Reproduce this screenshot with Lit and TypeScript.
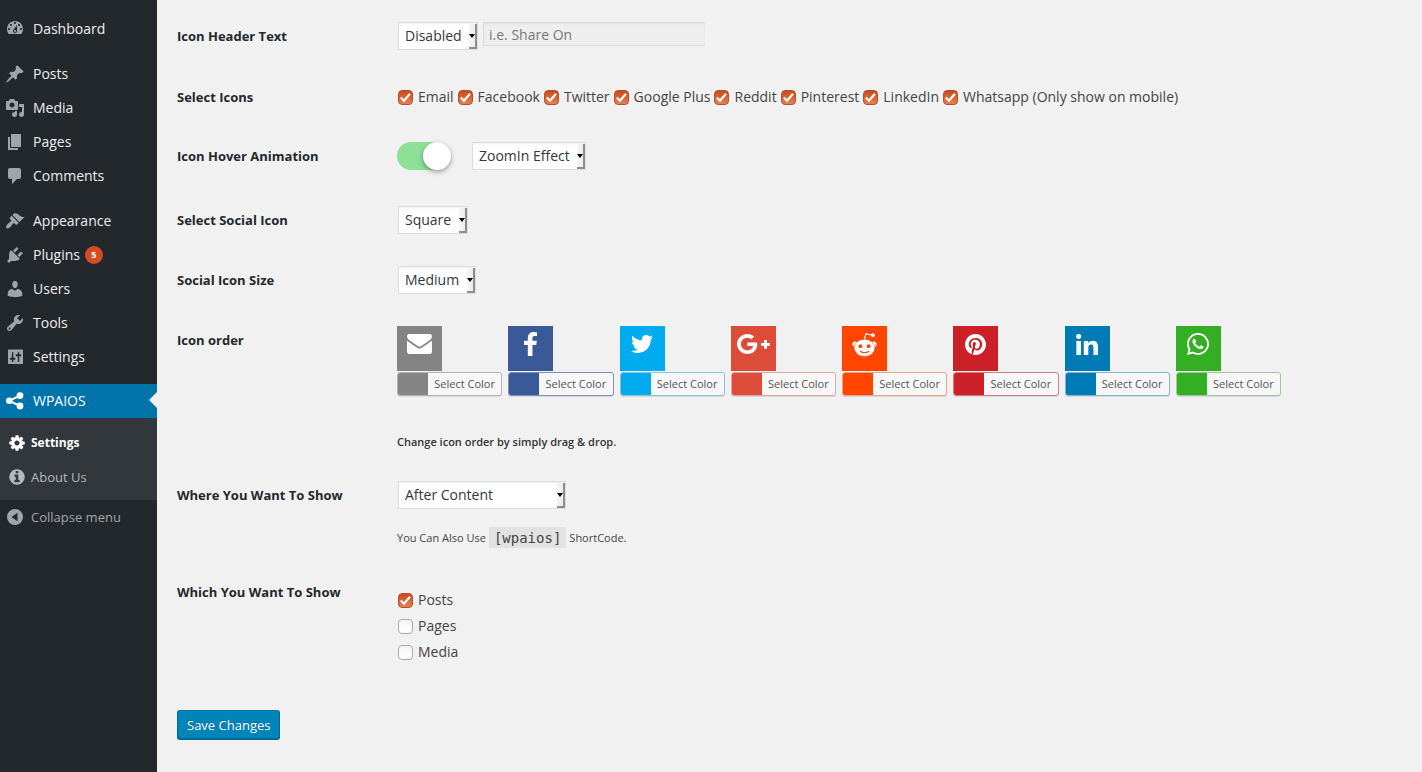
import { LitElement, html, css, svg, nothing } from "lit";
import { customElement, property } from "lit/decorators.js";
import { classMap } from "lit/directives/class-map.js";

const DASH: Record<string, string> = {
  dashboard:
    "M3.76 15h12.48c1.1-1.37 1.76-3.11 1.76-5 0-4.42-3.58-8-8-8s-8 3.58-8 8c0 1.89.66 3.63 1.76 5zM10 3c.55 0 1 .45 1 1s-.45 1-1 1-1-.45-1-1 .45-1 1-1zM6 5c.55 0 1 .45 1 1s-.45 1-1 1-1-.45-1-1 .45-1 1-1zm8 0c.55 0 1 .45 1 1s-.45 1-1 1-1-.45-1-1 .45-1 1-1zm-5.37 5.55L12 6v6c0 1.1-.9 2-2 2s-2-.9-2-2c0-.57.24-1.08.63-1.45zM4 9c.55 0 1 .45 1 1s-.45 1-1 1-1-.45-1-1 .45-1 1-1zm12 0c.55 0 1 .45 1 1s-.45 1-1 1-1-.45-1-1 .45-1 1-1zm-5 3c0-.55-.45-1-1-1s-1 .45-1 1 .45 1 1 1 1-.45 1-1z",
  posts:
    "M10.44 3.02l1.82-1.82 6.36 6.35-1.83 1.82c-1.05-.68-2.48-.57-3.41.36l-.75.75c-.92.93-1.04 2.35-.35 3.41l-1.83 1.82-2.41-2.41-2.8 2.79c-.42.42-3.38 2.71-3.8 2.29s1.86-3.39 2.28-3.81l2.79-2.79L4.1 9.36l1.83-1.82c1.05.69 2.48.57 3.4-.36l.75-.75c.93-.92 1.05-2.35.36-3.41z",
  media:
    "M13 11V4c0-.55-.45-1-1-1h-1.67L9 1H5L3.67 3H2c-.55 0-1 .45-1 1v7c0 .55.45 1 1 1h10c.55 0 1-.45 1-1zM7 4.5c1.38 0 2.5 1.12 2.5 2.5S8.38 9.5 7 9.5 4.5 8.38 4.5 7 5.62 4.5 7 4.5zM14 6h5v10.5c0 1.38-1.12 2.5-2.5 2.5S14 17.88 14 16.5s1.12-2.5 2.5-2.5c.17 0 .34.02.5.05V9h-3V6zm-4 8.05V13h2v3.5c0 1.38-1.12 2.5-2.5 2.5S7 17.88 7 16.5 8.12 14 9.5 14c.17 0 .34.02.5.05z",
  pages: "M6 15V2h10v13H6zm-1 1h8v2H3V5h2v11z",
  comments:
    "M5 2h9c1.1 0 2 .9 2 2v7c0 1.1-.9 2-2 2h-2l-5 5v-5H5c-1.1 0-2-.9-2-2V4c0-1.1.9-2 2-2z",
  appearance:
    "M14.48 11.06L7.41 3.99l1.5-1.5c.5-.56 2.3-.47 3.51.32 1.21.8 1.43 1.28 2.91 2.1 1.18.64 2.45 1.26 4.45.85zm-.71.71L6.7 4.7 4.93 6.47c-.39.39-.39 1.02 0 1.41l1.06 1.06c.39.39.39 1.03 0 1.42-.6.6-1.43 1.11-2.21 1.69-.35.26-.7.53-1.01.84C1.43 14.23.4 16.08 1.4 17.07c.99 1 2.84-.03 4.18-1.36.31-.31.58-.66.85-1.02.57-.78 1.08-1.61 1.69-2.21.39-.39 1.02-.39 1.41 0l1.06 1.06c.39.39 1.02.39 1.41 0z",
  plugins:
    "M13.11 4.36L9.87 7.6 8 5.73l3.24-3.24c.35-.34 1.05-.2 1.56.32.52.51.66 1.21.31 1.55zm-8 1.77l.91-1.12 9.01 9.01-1.19.84c-.71.71-2.63 1.16-3.82 1.16H6.14L4.9 17.26c-.59.59-1.54.59-2.12 0-.59-.58-.59-1.53 0-2.12l1.24-1.24v-3.88c0-1.13.4-3.19 1.09-3.89zm7.26 3.97l3.24-3.24c.34-.35 1.04-.21 1.55.31.52.51.66 1.21.31 1.55l-3.24 3.25z",
  users:
    "M10 9.25c-2.27 0-2.73-3.44-2.73-3.44C7 4.02 7.82 2 9.97 2c2.16 0 2.98 2.02 2.71 3.81 0 0-.41 3.44-2.68 3.44zm0 2.57L12.72 10c2.39 0 4.52 2.33 4.52 4.53v2.49s-3.65 1.13-7.24 1.13c-3.65 0-7.24-1.13-7.24-1.13v-2.49c0-2.25 1.94-4.48 4.47-4.48z",
  tools:
    "M16.68 9.77c-1.34 1.34-3.3 1.67-4.95.99l-5.41 6.52c-.99.99-2.59.99-3.58 0s-.99-2.59 0-3.57l6.52-5.42c-.68-1.65-.35-3.61.99-4.95 1.28-1.28 3.12-1.62 4.72-1.06l-2.89 2.89 2.82 2.82 2.86-2.87c.53 1.58.18 3.39-1.08 4.65zM3.81 16.21c.4.39 1.04.39 1.43 0 .4-.4.4-1.04 0-1.43-.39-.4-1.03-.4-1.43 0-.39.39-.39 1.03 0 1.43z",
  settings:
    "M18 16.500V3c0-.3-.2-.5-.5-.5h-14c-.3 0-.5.2-.5.5v13.500c0 .3.2.5.5.5h14c.3 0 .5-.2.5-.5zM8.3 10.8h1.2c.5 0 .9.4.9 1s-.4 1-.9 1H8.3v1.700c0 .4-.3.6-.7.6s-.7-.2-.7-.6v-1.700H5.700c-.5 0-.9-.4-.9-1s.4-1 .9-1h1.200V5.500c0-.4.3-.6.7-.6s.7.2.7.6zM14.200 9.200v5.300c0 .4-.3.6-.7.6s-.7-.2-.7-.6V9.200h-1.200c-.5 0-.9-.4-.9-1s.4-1 .9-1h1.200V5.500c0-.4.3-.6.7-.6s.7.2.7.6v1.700h1.200c.5 0 .9.4.9 1s-.4 1-.9 1z",
  share:
    "M4.300 6.500a3.300 3.300 0 0 1 0 6.600 3.300 3.300 0 0 1 0-6.600zM15 1.200a3.400 3.400 0 0 1 0 6.800 3.400 3.400 0 0 1 0-6.800zM15 11.600a3.400 3.400 0 0 1 0 6.800 3.400 3.400 0 0 1 0-6.800zM4 8.800L14.500 3.700l.9 1.800L4.900 10.600zM4.900 9L15.400 14.100l-.9 1.800L4 10.800z",
  collapse: "M10 2a8 8 0 1 0 0 16 8 8 0 0 0 0-16zM12.500 5.800v8.400L6.500 10z",
};

const COG =
  "M1152 896q0-106-75-181t-181-75-181 75-75 181 75 181 181 75 181-75 75-181zm512-109v222q0 12-8 23t-20 13l-185 28q-19 54-39 91 35 50 107 138 10 12 10 25t-9 23q-27 37-99 108t-94 71q-12 0-26-9l-138-108q-44 23-91 38-16 136-29 186-7 28-36 28h-222q-14 0-24.5-8.5t-11.5-21.5l-28-184q-49-16-90-37l-141 107q-10 9-25 9-14 0-25-11-126-114-165-168-7-10-7-23 0-12 8-23 15-21 51-66.5t54-70.5q-27-50-41-99l-183-27q-13-2-21-12.5t-8-23.5v-222q0-12 8-23t19-13l186-28q14-46 39-92-40-57-107-138-10-12-10-24 0-10 9-23 26-36 98.500-107.500t94.500-71.500q13 0 26 10l138 107q44-23 91-38 16-136 29-186 7-28 36-28h222q14 0 24.500 8.500t11.500 21.500l28 184q49 16 90 37l142-107q9-9 24-9 13 0 25 10 129 119 165 170 7 8 7 22 0 12-8 23-15 21-51 66.500t-54 70.500q26 50 41 98l183 28q13 2 21 12.500t8 23.500z";
const INFO =
  "M1152 1376v-160q0-14-9-23t-23-9h-96v-512q0-14-9-23t-23-9h-320q-14 0-23 9t-9 23v160q0 14 9 23t23 9h96v320h-96q-14 0-23 9t-9 23v160q0 14 9 23t23 9h448q14 0 23-9t9-23zm-128-896v-160q0-14-9-23t-23-9h-192q-14 0-23 9t-9 23v160q0 14 9 23t23 9h192q14 0 23-9t9-23zm640 416q0 209-103 385.500t-279.500 279.500-385.500 103-385.500-103-279.500-279.500-103-385.500 103-385.500 279.500-279.500 385.500-103 385.500 103 279.500 279.500 103 385.500z";

interface Network {
  id: string;
  color: string;
  edge: string;
  box: string;
  w: number;
  h: number;
  art: unknown;
}

const NETWORKS: Network[] = [
  {
    id: "Email", color: "#848484", edge: "#b4b4b4", box: "0 256 1792 1408", w: 25, h: 20,
    art: svg`<path d="M1792 710v794q0 66-47 113t-113 47h-1472q-66 0-113-47t-47-113v-794q44 49 101 87 362 246 497 345 57 42 92.500 65.500t94.500 48 110 24.500h2q51 0 110-24.500t94.500-48 92.500-65.500q170-123 498-345 57-39 100-87zm0-294q0 79-49 151t-122 123q-376 261-468 325-10 7-42.500 31t-54 38.500-52 32.500-57.500 27-50 9h-2q-23 0-50-9t-57.500-27-52-32.500-54-38.500-42.500-31q-91-64-262-182.500t-205-142.500q-62-42-117-115.500t-55-136.500q0-78 41.500-130t118.500-52h1472q65 0 112.500 47t47.500 113z"/>`,
  },
  {
    id: "Facebook", color: "#3b5998", edge: "#7f90b8", box: "479 0 864 1664", w: 13, h: 24,
    art: svg`<path d="M1343 12v264h-157q-86 0-116 36t-30 108v189h293l-39 296h-254v759h-306v-759h-255v-296h255v-218q0-186 104-288.500t277-102.500q147 0 228 12z"/>`,
  },
  {
    id: "Twitter", color: "#00aced", edge: "#8ac4d8", box: "0 48 512 416", w: 22, h: 18,
    art: svg`<path d="M459.370 151.716c.325 4.548.325 9.097.325 13.645 0 138.720-105.583 298.558-298.558 298.558-59.452 0-114.680-17.219-161.137-47.106 8.447.974 16.568 1.299 25.340 1.299 49.055 0 94.213-16.568 130.274-44.832-46.132-.975-84.792-31.188-98.112-72.772 6.498.974 12.995 1.624 19.818 1.624 9.421 0 18.843-1.300 27.614-3.573-48.081-9.747-84.143-51.980-84.143-102.985v-1.299c13.969 7.797 30.214 12.670 47.431 13.319-28.264-18.843-46.781-51.005-46.781-87.391 0-19.492 5.197-37.360 14.294-52.954 51.655 63.675 129.300 105.258 216.365 109.807-1.624-7.797-2.599-15.918-2.599-24.040 0-57.828 46.782-104.934 104.934-104.934 30.213 0 57.502 12.670 76.670 33.137 23.715-4.548 46.456-13.320 66.599-25.340-7.798 24.366-24.366 44.833-46.132 57.827 21.117-2.273 41.584-8.122 60.426-16.243-14.292 20.791-32.161 39.308-52.628 54.253z"/>`,
  },
  {
    id: "Google Plus", color: "#dd4b39", edge: "#d8a9a3", box: "12 64 616 384", w: 33, h: 20,
    art: svg`<path d="M386.061 228.496c1.834 9.692 3.143 19.384 3.143 31.956C389.204 370.205 315.599 448 204.800 448c-106.084 0-192-85.915-192-192s85.916-192 192-192c51.864 0 95.083 18.859 128.611 50.292l-52.126 50.030c-14.145-13.621-39.028-29.599-76.485-29.599-65.484 0-118.920 54.221-118.920 121.277 0 67.056 53.436 121.277 118.920 121.277 75.961 0 104.513-54.745 108.965-82.773H204.800v-66.009h181.261zm185.406 6.437V179.200h-56.001v55.733h-55.733v56.001h55.733v55.733h56.001v-55.733H627.200v-56.001h-55.733z"/>`,
  },
  {
    id: "Reddit", color: "#ff4500", edge: "#e2a68c", box: "0 0 25 25", w: 25, h: 25,
    art: svg`<circle cx="3.200" cy="12.300" r="2.700"/><circle cx="21.800" cy="12.300" r="2.700"/>
      <path d="M12.400 7.600l1.500-5.900 5.600 1.300" fill="none" stroke="#fff" stroke-width="1.200"/><circle cx="20.900" cy="3.200" r="1.900"/>
      <ellipse cx="12.500" cy="15.800" rx="10.400" ry="8.600" stroke="#ff4500" stroke-width=".5"/>
      <g fill="#ff4500"><circle cx="8.400" cy="14.200" r="1.900"/><circle cx="16.600" cy="14.200" r="1.900"/></g>
      <path d="M8.300 19.300c2.100 1.900 6.300 1.900 8.400 0" fill="none" stroke="#ff4500" stroke-width="1.200" stroke-linecap="round"/>`,
  },
  {
    id: "Pinterest", color: "#cb2027", edge: "#cf7f84", box: "0 8 496 496", w: 21, h: 21,
    art: svg`<path d="M496 256c0 137-111 248-248 248-25.600 0-50.200-3.900-73.400-11.100 10.100-16.500 25.200-43.500 30.800-65 3-11.600 15.400-59 15.400-59 8.100 15.400 31.700 28.500 56.800 28.500 74.800 0 128.700-68.800 128.700-154.300 0-81.900-66.900-143.200-152.900-143.200-107 0-163.900 71.800-163.900 150.100 0 36.400 19.400 81.700 50.300 96.100 4.700 2.200 7.200 1.200 8.300-3.300.8-3.400 5-20.300 6.900-28.100.6-2.500.3-4.700-1.700-7.100-10.100-12.500-18.300-35.300-18.300-56.600 0-54.700 41.400-107.600 112-107.600 60.900 0 103.600 41.500 103.600 100.900 0 67.100-33.900 113.600-78 113.600-24.300 0-42.600-20.100-36.700-44.800 7-29.500 20.500-61.300 20.500-82.600 0-19-10.200-34.900-31.400-34.900-24.900 0-44.900 25.700-44.900 60.200 0 22 7.400 36.800 7.400 36.800s-24.500 103.800-29 123.200c-5 21.400-3 51.600-.9 71.200C65.400 450.900 0 361.100 0 256 0 119 111 8 248 8s248 111 248 248z"/>`,
  },
  {
    id: "LinkedIn", color: "#007bb6", edge: "#83b4cc", box: "0 0 448 448", w: 22, h: 21,
    art: svg`<path d="M100.280 448H7.400V148.900h92.880zM53.790 108.100C24.090 108.100 0 83.500 0 53.800a53.790 53.790 0 0 1 107.580 0c0 29.700-24.100 54.300-53.790 54.300zM447.900 448h-92.680V302.400c0-34.700-.7-79.200-48.290-79.200-48.290 0-55.690 37.700-55.690 76.700V448h-92.780V148.900h89.080v40.800h1.300c12.400-23.500 42.690-48.300 87.880-48.300 94 0 111.280 61.900 111.280 142.300V448z"/>`,
  },
  {
    id: "Whatsapp (Only show on mobile)", color: "#34af23", edge: "#9ec897", box: "0 32 448 448", w: 22, h: 22,
    art: svg`<path d="M380.900 97.100C339 55.100 283.200 32 223.900 32c-122.400 0-222 99.600-222 222 0 39.100 10.200 77.300 29.600 111L0 480l117.700-30.900c32.400 17.700 68.900 27 106.100 27h.1c122.300 0 224.100-99.600 224.100-222 0-59.300-25.200-115-67.100-157zm-157 341.600c-33.200 0-65.700-8.900-94-25.700l-6.700-4-69.800 18.300L72 359.200l-4.400-7c-18.500-29.400-28.200-63.300-28.200-98.200 0-101.700 82.800-184.500 184.600-184.500 49.300 0 95.600 19.200 130.400 54.100 34.800 34.900 56.200 81.200 56.100 130.500 0 101.800-84.900 184.600-186.600 184.600zm101.200-138.200c-5.500-2.800-32.800-16.200-37.900-18-5.100-1.900-8.800-2.800-12.500 2.800-3.700 5.600-14.300 18-17.600 21.800-3.200 3.700-6.500 4.200-12 1.400-32.600-16.300-54-29.100-75.500-66-5.700-9.800 5.700-9.100 16.300-30.300 1.800-3.700.9-6.900-.5-9.700-1.400-2.800-12.500-30.100-17.100-41.200-4.500-10.800-9.100-9.300-12.500-9.500-3.200-.2-6.900-.2-10.600-.2-3.700 0-9.700 1.400-14.800 6.900-5.100 5.600-19.400 19-19.400 46.300 0 27.300 19.900 53.700 22.600 57.400 2.800 3.700 39.100 59.700 94.800 83.800 35.200 15.200 49 16.500 66.600 13.900 10.700-1.600 32.800-13.400 37.400-26.400 4.600-13 4.600-24.100 3.200-26.400-1.300-2.500-5-3.900-10.500-6.600z"/>`,
  },
];

const FONT = css`"Open Sans", "Noto Sans", sans-serif`;

@customElement("admin-menu")
class AdminMenu extends LitElement {
  static styles = css`
    :host { display: block; background: #23282d; font: 14px/18px ${FONT}; }
    .menu { padding-top: 12px; }
    .item, .sub, .collapse {
      display: flex; align-items: center; height: 34px; box-sizing: border-box;
      color: #eee; text-decoration: none;
    }
    .item { gap: 8px; padding-left: 5px; }
    .item.last { margin-bottom: 11px; }
    .item.before-current { margin-bottom: 10px; }
    .item.current { position: relative; background: #0073aa; color: #fff; }
    .item.current::after {
      content: ""; position: absolute; right: 0; top: 8px;
      border: 8px solid transparent; border-left-width: 0; border-right-color: #f1f1f1;
    }
    .glyph { width: 20px; height: 20px; fill: #a0a5aa; fill-rule: evenodd; flex: none; }
    .current .glyph { fill: #fff; fill-rule: nonzero; }
    .small-glyph { width: 18px; height: 18px; fill: currentColor; flex: none; }
    .badge {
      width: 18px; height: 18px; margin-left: -3px; border-radius: 9px; background: #d54e21;
      color: #fff; font-size: 9px; font-weight: 700; text-align: center;
    }
    .submenu { background: #32373c; padding: 8px 0 6px; }
    .sub { gap: 5px; padding-left: 8px; font-size: 13px; color: #b4b9be; }
    .sub.active { color: #fff; font-weight: 700; font-size: 12px; }
    .collapse {
      gap: 6px; width: 100%; padding: 0 0 0 5px; border: 0; background: none;
      font: 13px/18px ${FONT}; color: #a0a5aa;
    }
  `;

  private item(label: string, icon: string, extra = "", badge = "") {
    return html`<a href="#" class="item ${extra}">
      <svg class="glyph" viewBox="0 0 20 20" aria-hidden="true"><path d=${DASH[icon]}></path></svg>
      <span>${label}</span>${badge ? html`<span class="badge">${badge}</span>` : nothing}
    </a>`;
  }

  render() {
    return html`<nav class="menu">
      ${this.item("Dashboard", "dashboard", "last")}
      ${this.item("Posts", "posts")}
      ${this.item("Media", "media")}
      ${this.item("Pages", "pages")}
      ${this.item("Comments", "comments", "last")}
      ${this.item("Appearance", "appearance")}
      ${this.item("Plugins", "plugins", "", "5")}
      ${this.item("Users", "users")}
      ${this.item("Tools", "tools")}
      ${this.item("Settings", "settings", "before-current")}
      ${this.item("WPAIOS", "share", "current")}
      <div class="submenu">
        <a href="#" class="sub active"><svg class="small-glyph" viewBox="0 0 1792 1792" aria-hidden="true"><path d=${COG}></path></svg>Settings</a>
        <a href="#" class="sub"><svg class="small-glyph" viewBox="0 0 1792 1792" aria-hidden="true"><path d=${INFO}></path></svg>About Us</a>
      </div>
      <button class="collapse" type="button">
        <svg class="glyph" viewBox="0 0 20 20" aria-hidden="true"><path d=${DASH.collapse}></path></svg>Collapse menu
      </button>
    </nav>`;
  }
}

@customElement("app-root")
class AppRoot extends LitElement {
  @property({ attribute: false }) networks = NETWORKS;

  static styles = css`
    :host {
      display: grid; grid-template-columns: 157px minmax(0, 1fr); min-height: 100vh;
      background: #f1f1f1; color: #444; font: 14px/18px ${FONT};
    }
    .main { padding: 7px 20px 31px; }
    .row { display: grid; grid-template-columns: 220px minmax(0, 1fr); }
    .heading { padding: 20px 10px 20px 0; color: #23282d; font-weight: 700; font-size: 13px; line-height: 18px; }
    .field { padding: 15px 0; }
    .line { display: flex; align-items: flex-start; gap: 5px; min-height: 31px; }
    .line.tall { min-height: 34px; gap: 20px; }
    .line.short { min-height: 30px; }
    .checks { display: flex; flex-wrap: wrap; gap: 3px; padding: 5px 0 6px; }
    .check { display: flex; align-items: center; gap: 5px; }
    .stack { display: grid; gap: 8px; padding: 13px 0 0; }
    .box {
      appearance: none; box-sizing: border-box; width: 15px; height: 15px; margin: 0 0 0 1px; flex: none;
      border: 1px solid #aaa; border-radius: 4px; background: linear-gradient(#f4f4f4, #fff);
    }
    .box:checked {
      border-color: #b5502d;
      background:
        url("data:image/svg+xml,%3Csvg xmlns='http://www.w3.org/2000/svg' viewBox='0 0 13 13'%3E%3Cpath d='M1.800 6.500l3.200 3.200 6-7' fill='none' stroke='white' stroke-width='2.200'/%3E%3C/svg%3E") center / 13px 13px no-repeat,
        linear-gradient(#cb4a17, #e58055);
    }
    .pick { position: relative; display: inline-flex; margin-left: 1px; }
    .pick::after {
      content: ""; position: absolute; top: 2px; right: 1px; bottom: 1px; width: 8px; box-sizing: border-box;
      border-right: 2px solid #8d8d8d; border-bottom: 2px solid #8d8d8d; pointer-events: none;
      background: linear-gradient(90deg, #f7f5f4, #edecea);
    }
    .pick::before {
      content: ""; position: absolute; z-index: 1; top: 12px; right: 3px; pointer-events: none;
      border: 3px solid transparent; border-top: 4px solid #000; border-bottom: 0;
    }
    .select {
      appearance: none; box-sizing: border-box; height: 28px; margin: 0; padding: 0 15px 0 6px;
      border: 1px solid #ddd; border-radius: 0; background: #fff; color: #32373c;
      box-shadow: inset 0 1px 2px rgba(0, 0, 0, 0.07); font: 14px/18px ${FONT};
    }
    .select.wide { width: 168px; }
    .text {
      box-sizing: border-box; width: 222px; height: 24px; padding: 0 5px; border: 1px solid #ddd; border-right: 0; border-radius: 0;
      background: #eee; box-shadow: inset 0 1px 2px rgba(0, 0, 0, 0.07); font: 14px/18px ${FONT}; color: #444;
    }
    .text::placeholder { color: #777; opacity: 1; }
    .switch {
      appearance: none; position: relative; width: 54px; height: 28px; margin: 0; border-radius: 14px; background: #8ce196;
    }
    .switch::before {
      content: ""; position: absolute; top: 0; right: 0; width: 28px; height: 28px; border-radius: 14px;
      background: #fff; box-shadow: 0 2px 5px rgba(0, 0, 0, 0.35);
    }
    .order { display: grid; grid-template-columns: repeat(8, minmax(0, 1fr)); gap: 6px; max-width: 884px; margin: 0; padding: 0; list-style: none; }
    .tile { display: flex; align-items: center; justify-content: center; box-sizing: border-box; width: 45px; height: 45px; padding-bottom: 9px; margin-bottom: 1px; }
    .logo { fill: #fff; }
    .color {
      display: flex; box-sizing: border-box; width: 100%; height: 24px; padding: 0; border: 1px solid; border-radius: 3px;
      background: #f7f7f7; overflow: hidden; box-shadow: 0 1px 0 rgba(0, 0, 0, 0.1); font: 11px/22px ${FONT}; color: #555;
    }
    .swatch { width: 30px; align-self: stretch; flex: none; }
    .caption { flex: 1; text-align: center; white-space: nowrap; }
    .hint { margin: 0; font-size: 11px; line-height: 18px; }
    .hint.strong { padding: 37px 0 0; font-weight: 600; color: #333; }
    .hint.after { padding: 18px 0 0; display: flex; align-items: center; gap: 3px; }
    .code { padding: 2px 5px 1px; background: #e2e2e2; font: 14px/18px "DejaVu Sans Mono", monospace; }
    .save {
      display: block; height: 29px; margin-top: 34px; padding: 0 9px; border: 1px solid #006799; border-color: #0073aa #006799 #006799;
      border-radius: 3px; background: #0085ba; box-shadow: 0 1px 0 #006799; color: #fff; font: 13px/26px ${FONT};
      text-shadow: 0 -1px 1px #006799;
    }
  `;

  private select(id: string, value: string, wide = false) {
    return html`<span class="pick"><select id=${id} aria-label=${value} class=${classMap({ select: true, wide })}><option>${value}</option></select></span>`;
  }

  private check(label: string, on: boolean) {
    return html`<label class="check"><input class="box" type="checkbox" .checked=${on} />${label}</label>`;
  }

  render() {
    return html`
      <admin-menu></admin-menu>
      <main class="main">
        <form>
          <div class="row">
            <label class="heading" for="header-mode">Icon Header Text</label>
            <div class="field"><div class="line">
              ${this.select("header-mode", "Disabled")}
              <input class="text" type="text" placeholder="i.e. Share On" aria-label="Header text" />
            </div></div>
          </div>
          <div class="row">
            <div class="heading">Select Icons</div>
            <div class="field"><div class="checks">${this.networks.map((n) => this.check(n.id, true))}</div></div>
          </div>
          <div class="row">
            <label class="heading" for="hover">Icon Hover Animation</label>
            <div class="field"><div class="line tall">
              <input id="hover" class="switch" type="checkbox" checked />
              ${this.select("effect", "ZoomIn Effect")}
            </div></div>
          </div>
          <div class="row">
            <label class="heading" for="shape">Select Social Icon</label>
            <div class="field"><div class="line short">${this.select("shape", "Square")}</div></div>
          </div>
          <div class="row">
            <label class="heading" for="size">Social Icon Size</label>
            <div class="field"><div class="line short">${this.select("size", "Medium")}</div></div>
          </div>
          <div class="row">
            <div class="heading">Icon order</div>
            <div class="field">
              <ul class="order">
                ${this.networks.map((n) => html`<li>
                  <div class="tile" style="background:${n.color}">
                    <svg class="logo" width=${n.w} height=${n.h} viewBox=${n.box} preserveAspectRatio="none" aria-hidden="true">${n.art}</svg>
                  </div>
                  <button class="color" type="button" style="border-color:${n.edge}">
                    <span class="swatch" style="background:${n.color}"></span><span class="caption">Select Color</span>
                  </button>
                </li>`)}
              </ul>
              <p class="hint strong">Change icon order by simply drag &amp; drop.</p>
            </div>
          </div>
          <div class="row">
            <label class="heading" for="where">Where You Want To Show</label>
            <div class="field">
              ${this.select("where", "After Content", true)}
              <p class="hint after">You Can Also Use <code class="code">[wpaios]</code> ShortCode.</p>
            </div>
          </div>
          <div class="row">
            <div class="heading">Which You Want To Show</div>
            <div class="field"><div class="stack">
              ${this.check("Posts", true)}${this.check("Pages", false)}${this.check("Media", false)}
            </div></div>
          </div>
          <button class="save" type="button">Save Changes</button>
        </form>
      </main>
    `;
  }
}
